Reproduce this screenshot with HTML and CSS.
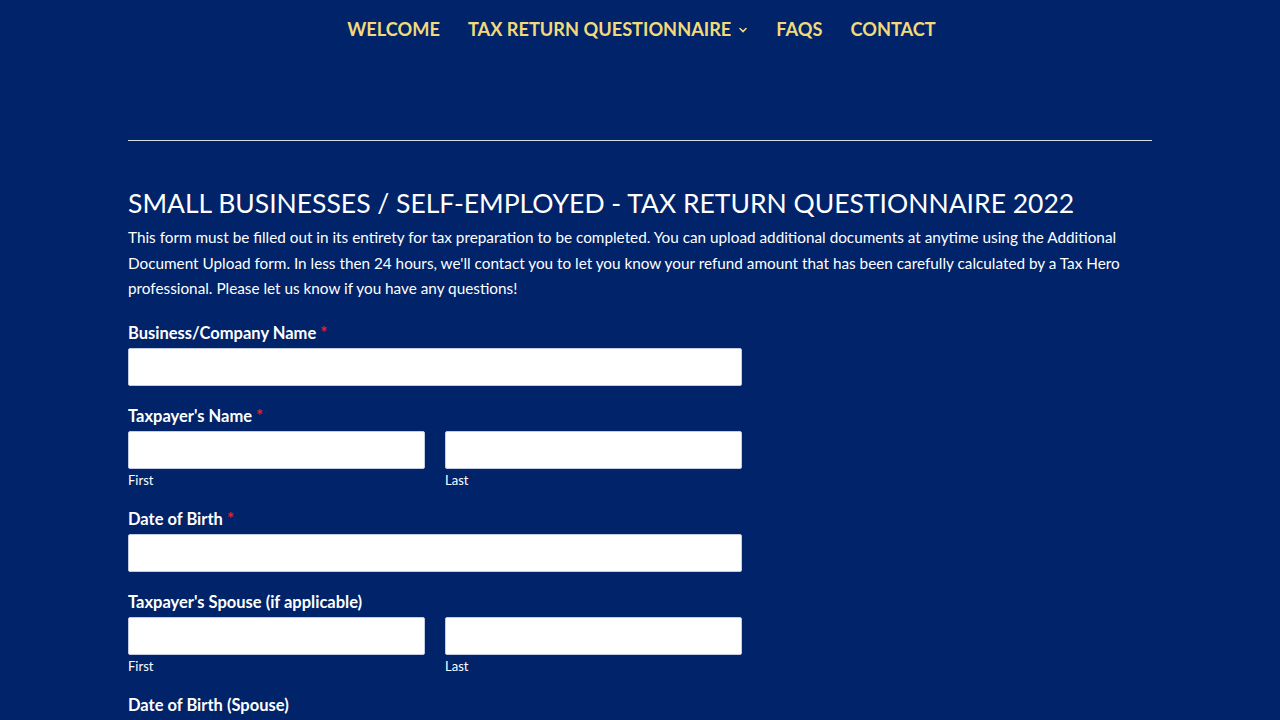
FILE: index.html
```html
<!DOCTYPE html>
<html lang="en">
<head>
<meta charset="utf-8">
<title>Tax Return Questionnaire</title>
<link rel="stylesheet" href="styles.css">
</head>
<body>
<header class="top">
  <nav class="nav">
    <a class="nav-item" href="#">WELCOME</a>
    <a class="nav-item has-sub" href="#">TAX RETURN QUESTIONNAIRE
      <svg class="chev" width="10" height="8" viewBox="0 0 10 8"><path d="M2 2.5 L5 5.5 L8 2.5" fill="none" stroke="#f2da7b" stroke-width="1.6" stroke-linecap="round"/></svg>
    </a>
    <a class="nav-item" href="#">FAQS</a>
    <a class="nav-item" href="#">CONTACT</a>
  </nav>
</header>
<main class="content">
  <hr class="divider">
  <h1 class="title">SMALL BUSINESSES / SELF-EMPLOYED - TAX RETURN QUESTIONNAIRE 2022</h1>
  <p class="intro">This form must be filled out in its entirety for tax preparation to be completed. You can upload additional documents at anytime using the Additional Document Upload form. In less then 24 hours, we'll contact you to let you know your refund amount that has been carefully calculated by a Tax Hero professional. Please let us know if you have any questions!</p>
  <form class="form">
    <div class="field">
      <label class="label">Business/Company Name <span class="req">*</span></label>
      <input class="input" type="text">
    </div>
    <div class="field">
      <label class="label">Taxpayer's Name <span class="req">*</span></label>
      <div class="split">
        <div class="sub"><input class="input" type="text"><span class="sublabel">First</span></div>
        <div class="sub"><input class="input" type="text"><span class="sublabel">Last</span></div>
      </div>
    </div>
    <div class="field">
      <label class="label">Date of Birth <span class="req">*</span></label>
      <input class="input" type="text">
    </div>
    <div class="field">
      <label class="label">Taxpayer's Spouse (if applicable)</label>
      <div class="split">
        <div class="sub"><input class="input" type="text"><span class="sublabel">First</span></div>
        <div class="sub"><input class="input" type="text"><span class="sublabel">Last</span></div>
      </div>
    </div>
    <div class="field">
      <label class="label">Date of Birth (Spouse)</label>
      <input class="input" type="text">
    </div>
  </form>
</main>
</body>
</html>
```
FILE: styles.css
```css
* { box-sizing: border-box; }
html, body { margin: 0; padding: 0; }
body {
  background: #002369;
  color: #ffffff;
  font-family: "Lato", "Noto Sans", sans-serif;
  overflow: hidden;
}
.top {
  height: 140px;
  padding-top: 18px;
}
.nav {
  display: flex;
  justify-content: center;
  gap: 28px;
  padding-left: 3px;
}
.nav-item {
  color: #f2da7b;
  text-decoration: none;
  font-family: "Lato", sans-serif;
  font-weight: 700;
  font-size: 18.2px;
  line-height: 22px;
  display: flex;
  align-items: center;
  gap: 7px;
}
.chev { margin-top: 1px; }
.content {
  width: 1024px;
  margin: 0 auto;
}
.divider {
  margin: 0;
  border: 0;
  height: 1px;
  background: #d4dde6;
}
.title {
  margin: 45px 0 0;
  font-weight: 400;
  font-size: 26.5px;
  line-height: 34px;
}
.intro {
  margin: 5px 0 0;
  font-size: 15.3px;
  line-height: 25.5px;
}
.form { margin-top: 19px; }
.field {
  display: flex;
  flex-direction: column;
  width: 614px;
  margin-bottom: 18px;
}
.label {
  font-weight: 700;
  font-size: 16.5px;
  line-height: 22px;
  padding-top: 1px;
  margin-bottom: 4px;
}
.req { color: #e8202a; }
.input {
  width: 100%;
  height: 38px;
  background: #fff;
  border: 1px solid #c5cbe0;
  border-radius: 2px;
  margin: 0;
}
.split {
  display: flex;
  gap: 20px;
}
.sub {
  flex: 1;
  display: flex;
  flex-direction: column;
}
.sublabel {
  font-size: 13px;
  line-height: 18px;
  margin-top: 2px;
}
```
